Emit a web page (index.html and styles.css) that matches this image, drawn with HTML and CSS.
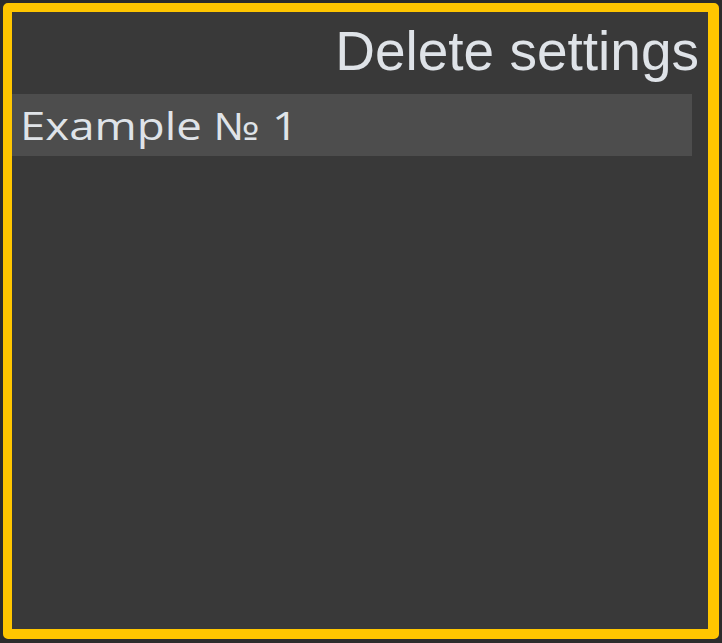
FILE: index.html
```html
<!DOCTYPE html>
<html>
<head>
<meta charset="utf-8">
<link rel="stylesheet" href="styles.css">
</head>
<body>
<div class="frame">
  <div class="title">Delete settings</div>
  <div class="list">
    <div class="item"><span class="item-label">Example № 1</span></div>
  </div>
</div>
</body>
</html>
```
FILE: styles.css
```css
html, body {
  margin: 0;
  padding: 0;
  background: #2c2c2c;
}
body {
  width: 722px;
  height: 643px;
  padding: 3px 3px 4px 3px;
  box-sizing: border-box;
}
.frame {
  height: 100%;
  box-sizing: border-box;
  border-style: solid;
  border-color: #ffc600;
  border-width: 9px 11px 10px 9px;
  border-radius: 5px;
  background: #393939;
  display: flex;
  flex-direction: column;
}
.title {
  font-family: "Liberation Sans", Arial, sans-serif;
  font-size: 55px;
  line-height: 78px;
  padding-bottom: 4px;
  padding-right: 9px;
  text-align: right;
  color: #dfe3e8;
}
.list {
  padding-right: 16px;
}
.item {
  background: #4d4d4d;
  height: 62px;
  line-height: 62px;
  padding-left: 8px;
  font-family: "Open Sans", "Noto Sans", sans-serif;
  font-size: 38px;
  color: #dfe3e8;
  white-space: nowrap;
}
.item-label {
  display: inline-block;
  transform: scaleX(1.2);
  transform-origin: left center;
}
```
